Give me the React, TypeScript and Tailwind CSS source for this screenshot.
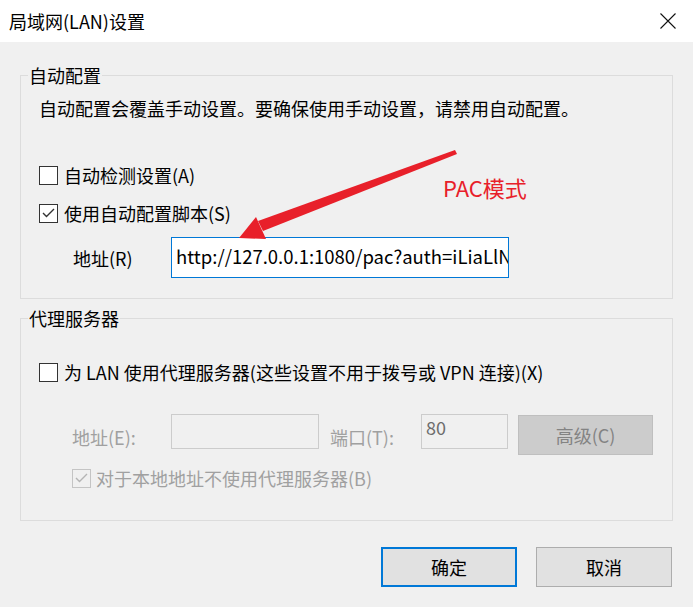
import React from 'react';

const FONT = "font-['Noto_Sans_CJK_SC','Noto_Sans',sans-serif]";

const Check: React.FC<{ checked?: boolean; disabled?: boolean }> = ({ checked, disabled }) => (
  <span
    className={`flex h-[19px] w-[19px] shrink-0 items-center justify-center border ${
      disabled ? 'border-[#c4c4c4] bg-[#f0f0f0]' : 'border-[#333333] bg-white'
    }`}
  >
    {checked && (
      <svg width="13" height="10" viewBox="0 0 13 10">
        <polyline
          points="1,5 4.5,8.5 12,1"
          fill="none"
          stroke={disabled ? '#b4b4b4' : '#333333'}
          strokeWidth="1.4"
        />
      </svg>
    )}
  </span>
);

const Group: React.FC<{ title: string; className?: string; children: React.ReactNode }> = ({
  title,
  className,
  children,
}) => (
  <div className={`relative border border-[#dcdcdc] ${className ?? ''}`}>
    <span className="absolute -top-[13px] left-[7px] bg-[#f0f0f0] px-[1px] text-[18px] leading-[24px] text-black">
      {title}
    </span>
    {children}
  </div>
);

export default function App() {
  return (
    <div className={`relative h-[607px] w-[693px] overflow-hidden bg-[#f0f0f0] ${FONT} text-[18px] text-black`}>
      {/* title bar */}
      <div className="flex h-[42px] items-center justify-between bg-white pl-[9px] pr-[17px]">
        <span className="text-[18px] leading-[24px]">局域网(LAN)设置</span>
        <svg width="16" height="16" viewBox="0 0 16 16">
          <path d="M0.5 0.5 L15.5 15.5 M15.5 0.5 L0.5 15.5" stroke="#111" strokeWidth="1.1" />
        </svg>
      </div>

      <div className="px-[20px]">
        {/* 自动配置 */}
        <Group title="自动配置" className="mt-[33px] h-[224px] px-[18px] pt-[20px]">
          <div className="leading-[24px]">自动配置会覆盖手动设置。要确保使用手动设置，请禁用自动配置。</div>
          <label className="mt-[43px] flex h-[24px] items-center gap-[6px]">
            <Check />
            <span>自动检测设置(A)</span>
          </label>
          <label className="mt-[14px] flex h-[24px] items-center gap-[6px]">
            <Check checked />
            <span>使用自动配置脚本(S)</span>
          </label>
          <div className="mt-[12px] flex h-[41px] items-center">
            <span className="ml-[34px] w-[98px] leading-[24px]">地址(R)</span>
            <div className="h-[41px] w-[338px] overflow-hidden whitespace-nowrap border border-[#0078d7] bg-white pl-[4px] pt-[6px] text-[18.5px] leading-[24px]">
              http://127.0.0.1:1080/pac?auth=iLiaLlN
            </div>
          </div>
        </Group>

        {/* 代理服务器 */}
        <Group title="代理服务器" className="mt-[19px] h-[203px] px-[18px] pt-[41px]">
          <label className="flex h-[24px] items-center gap-[6px]">
            <Check />
            <span>为 LAN 使用代理服务器(这些设置不用于拨号或 VPN 连接)(X)</span>
          </label>
          <div className="mt-[30px] flex h-[41px] items-start text-[#a0a0a0]">
            <span className="ml-[33px] mt-[11px] w-[99px] leading-[24px]">地址(E):</span>
            <div className="h-[35px] w-[148px] border border-[#cccccc] bg-[#f0f0f0]" />
            <span className="ml-[11px] mt-[11px] w-[91px] leading-[24px]">端口(T):</span>
            <div className="h-[35px] w-[87px] border border-[#cccccc] bg-[#f0f0f0] pl-[4px] leading-[24px] text-[#6d6d6d]">
              80
            </div>
            <div className="ml-[10px] mt-[1px] flex h-[40px] w-[135px] items-center justify-center border border-[#bfbfbf] bg-[#cccccc] text-[#838383]">
              高级(C)
            </div>
          </div>
          <label className="mt-[11px] flex h-[24px] items-center gap-[5px] pl-[33px] text-[#a0a0a0]">
            <Check checked disabled />
            <span>对于本地地址不使用代理服务器(B)</span>
          </label>
        </Group>
      </div>

      {/* buttons */}
      <div className="mt-[26px] flex justify-end gap-[19px] pr-[21px]">
        <button className="flex h-[40px] w-[136px] items-center justify-center border-2 border-[#0078d7] bg-[#e1e1e1]">
          确定
        </button>
        <button className="flex h-[40px] w-[136px] items-center justify-center border border-[#adadad] bg-[#e1e1e1]">
          取消
        </button>
      </div>

      {/* annotation */}
      <span className="absolute left-[443px] top-[172px] text-[22px] leading-[30px] text-[#e8202a]">PAC模式</span>
      <svg className="pointer-events-none absolute left-0 top-0" width="693" height="607">
        <polygon points="455,150 457,154 263,231 258,221" fill="#e8202a" />
        <polygon points="239,238 256,217 266,239" fill="#e8202a" />
      </svg>
    </div>
  );
}
